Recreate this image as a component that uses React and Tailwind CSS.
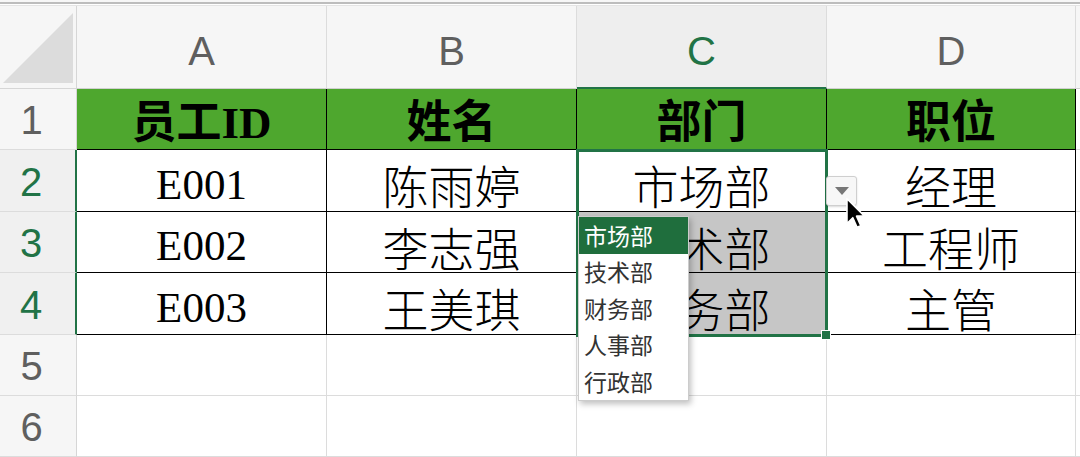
import React from "react";

const CJK = "font-['Noto_Sans_CJK_SC',sans-serif]";
const SERIF = "font-['Liberation_Serif','Noto_Sans_CJK_SC',serif]";
const SANS = "font-['Liberation_Sans',Arial,sans-serif]";

function RowHead({ n, active, h }) {
  return (
    <div
      className={`w-[77px] shrink-0 flex items-center justify-center pr-[13px] pt-[2px] border-b border-[#dcdcdc] ${SANS} text-[40px] leading-none ${
        active
          ? "bg-[#f0f0f0] text-[#217346] border-r-2 border-r-[#217346]"
          : "bg-[#f6f6f6] text-[#5f5f5f] border-r border-r-[#d6d6d6]"
      }`}
      style={{ height: h }}
    >
      {n}
    </div>
  );
}

function Cell({ w, children, cls = "", font = CJK }) {
  return (
    <div
      className={`shrink-0 flex items-center justify-center text-black leading-none ${font} ${cls}`}
      style={{ width: w }}
    >
      {children}
    </div>
  );
}

const W = [250, 250, 250, 249];

export default function App() {
  const dataRows = [
    { n: 2, h: 62, cells: ["E001", "陈雨婷", "市场部", "经理"] },
    { n: 3, h: 61, cells: ["E002", "李志强", "技术部", "工程师"] },
    { n: 4, h: 62, cells: ["E003", "王美琪", "财务部", "主管"] },
  ];
  const list = ["市场部", "技术部", "财务部", "人事部", "行政部"];

  return (
    <div className="w-[1080px] h-[457px] overflow-hidden bg-white relative">
      {/* top strip */}
      <div className="h-[6px] bg-[#f7f7f7] pt-[2px]">
        <div className="h-[2px] bg-[#bdbdbd]" />
        <div className="h-[1px] bg-white" />
        <div className="h-[1px] bg-[#e4e4e4]" />
      </div>

      {/* column headers */}
      <div className="flex h-[83px]">
        <div className="w-[77px] shrink-0 bg-[#f6f6f6] border-r border-b border-[#d6d6d6] relative">
          <svg width="77" height="83" className="absolute left-0 top-0">
            <polygon points="73,7 73,77 3,77" fill="#dcdcdc" />
          </svg>
        </div>
        {["A", "B", "C", "D"].map((l, i) => (
          <div
            key={l}
            className={`shrink-0 flex items-center justify-center pt-[8px] ${SANS} text-[40px] leading-none border-r border-r-[#dcdcdc] ${
              l === "C"
                ? "bg-[#eeeeee] text-[#217346] border-b-2 border-b-[#217346]"
                : "bg-[#f6f6f6] text-[#5f5f5f] border-b border-b-[#d0d0d0]"
            }`}
            style={{ width: W[i] }}
          >
            {l}
          </div>
        ))}
        <div className="flex-1 bg-[#f6f6f6] border-b border-[#d0d0d0]" />
      </div>

      {/* row 1 */}
      <div className="flex h-[61px]">
        <RowHead n={1} h={61} />
        {["员工ID", "姓名", "部门", "职位"].map((t, i) => (
          <Cell
            key={t}
            w={W[i]}
            font={SERIF}
            cls="bg-[#4ea72e] border-r border-b border-black text-[45px] font-bold pt-[9px]"
          >
            {t}
          </Cell>
        ))}
        <div className="flex-1 border-b border-[#dcdcdc]" />
      </div>

      {/* rows 2-4 */}
      {dataRows.map((r) => (
        <div key={r.n} className="flex" style={{ height: r.h }}>
          <RowHead n={r.n} h={r.h} active />
          {r.cells.map((t, i) => (
            <Cell
              key={i}
              w={W[i]}
              font={i === 0 ? SERIF : CJK}
              cls={`border-r border-b border-black pt-[7px] ${i === 0 ? "text-[43px]" : "text-[46px] font-light"} ${
                i === 2 && r.n > 2 ? "bg-[#c6c6c6]" : "bg-white"
              }`}
            >
              {t}
            </Cell>
          ))}
          <div className="flex-1 border-b border-[#dcdcdc]" />
        </div>
      ))}

      {/* rows 5-6 */}
      {[5, 6].map((n) => (
        <div key={n} className="flex h-[61px]">
          <RowHead n={n} h={61} />
          {W.map((w, i) => (
            <div key={i} className="shrink-0 border-r border-b border-[#dcdcdc]" style={{ width: w }} />
          ))}
          <div className="flex-1 border-b border-[#dcdcdc]" />
        </div>
      ))}

      {/* selection border C2:C4 */}
      <div className="absolute left-[576px] top-[149px] w-[252px] h-[188px] border-[3px] border-[#217346] pointer-events-none" />
      <div className="absolute left-[821px] top-[330px] w-[10px] h-[10px] bg-[#217346] border border-white" />

      {/* dropdown button */}
      <div className="absolute left-[826px] top-[176px] w-[31px] h-[30px] bg-[#f7f7f7] border border-[#cfcfcf] rounded-[3px] flex items-center justify-center shadow-[0_1px_2px_rgba(0,0,0,0.15)]">
        <svg width="14" height="9" viewBox="0 0 14 9">
          <polygon points="0,0 14,0 7,8" fill="#777" />
        </svg>
      </div>

      {/* cursor */}
      <svg className="absolute left-[845px] top-[197px]" width="22" height="34" viewBox="0 0 20 32">
        <path
          d="M1.5 1.5 L1.5 25 L7 19.5 L11 28.5 L14.5 27 L10.5 18 L18 18 Z"
          fill="#000"
          stroke="#fff"
          strokeWidth="1.5"
          strokeLinejoin="round"
        />
      </svg>

      {/* dropdown list */}
      <div className={`absolute left-[578px] top-[216px] w-[111px] bg-white border border-[#cccccc] shadow-[2px_3px_6px_rgba(0,0,0,0.25)] ${CJK}`}>
        {list.map((t, i) => (
          <div
            key={t}
            className={`h-[36.5px] flex items-center pl-[5px] text-[23px] leading-none ${
              i === 0 ? "bg-[#1f6e3d] text-white" : "text-[#333333]"
            }`}
          >
            {t}
          </div>
        ))}
      </div>
    </div>
  );
}
